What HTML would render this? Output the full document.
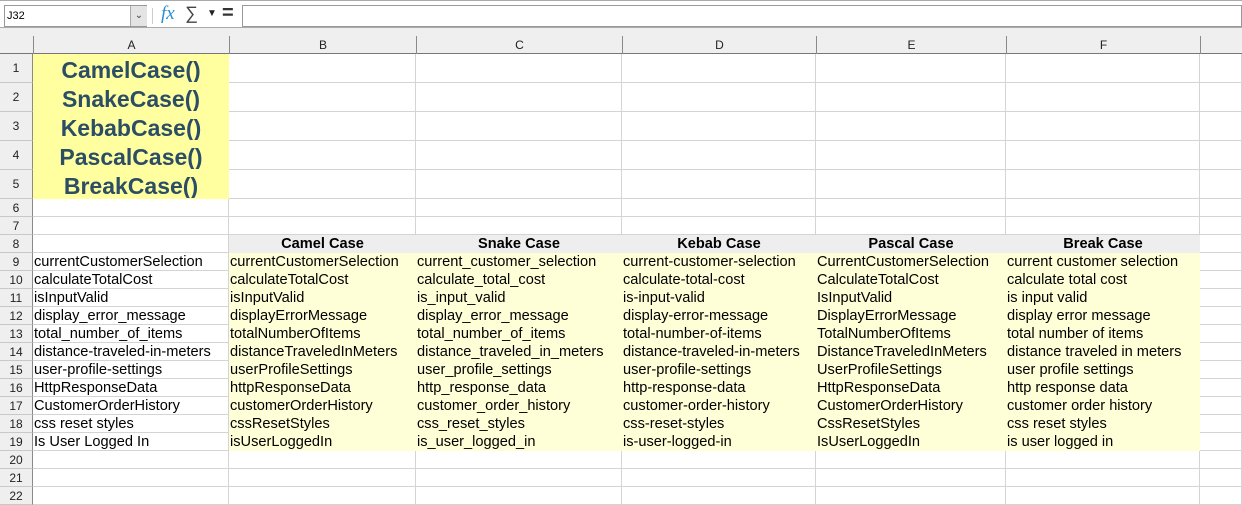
<!DOCTYPE html><html><head><style>
body{margin:0;width:1242px;height:500px;overflow:hidden;background:#fff;font-family:"Liberation Sans",Arial,sans-serif;position:relative}
.a{position:absolute;box-sizing:border-box}
.c{position:absolute;box-sizing:border-box;border-right:1px solid #d4d4d4;border-bottom:1px solid #d4d4d4;font-size:14.6px;line-height:19px;padding-left:1px;white-space:nowrap;overflow:hidden;color:#000}
.y{background:#ffffd7;border-color:#ffffd7}
.g{background:#eeeeee;border-color:#eeeeee;font-weight:bold;text-align:center}
.t{background:#ffff9f;border-color:#ffff9f;color:#2b4d65;font-weight:bold;font-size:23px;text-align:center;line-height:33px}
.rh{position:absolute;left:0;width:33px;box-sizing:border-box;background:#efefef;border-right:1px solid #8a8a8a;border-bottom:1px solid #c8c8c8;font-size:12px;text-align:center;color:#222}
.ch{position:absolute;top:36px;height:18px;box-sizing:border-box;border-left:1px solid #8a8a8a;font-size:12px;text-align:center;line-height:18px;color:#222}
</style></head><body>
<div class="a" style="left:0;top:0;width:1242px;height:28px;background:#fff;border-top:1px solid #aaa;border-bottom:1px solid #aaa"></div>
<div class="a" style="left:4px;top:5px;width:143px;height:22px;border:1px solid #999;background:#fff;font-size:11px;line-height:20px;padding-left:2px">J32</div>
<div class="a" style="left:130px;top:6px;width:17px;height:20px;background:#e4e4e4;border-left:1px solid #aaa;font-size:10px;text-align:center;line-height:20px;color:#444">&#8964;</div>
<div class="a" style="left:152px;top:8px;width:1px;height:16px;background:#ccc"></div>
<div class="a" style="left:161px;top:3px;font-family:'Liberation Serif',serif;font-style:italic;font-size:19px;color:#2a8fd0">fx</div>
<div class="a" style="left:185px;top:3px;font-size:18px;color:#444">&#8721;</div>
<div class="a" style="left:207px;top:8px;font-size:10px;color:#222">&#9660;</div>
<div class="a" style="left:222px;top:2px;font-size:20px;font-weight:bold;color:#333">=</div>
<div class="a" style="left:242px;top:5px;width:1000px;height:22px;border:1px solid #999;background:#fff"></div>
<div class="a" style="left:0;top:28px;width:1242px;height:26px;background:#efefef;border-bottom:1px solid #777"></div>
<div class="ch" style="left:33px;width:196px">A</div>
<div class="ch" style="left:229px;width:187px">B</div>
<div class="ch" style="left:416px;width:206px">C</div>
<div class="ch" style="left:622px;width:194px">D</div>
<div class="ch" style="left:816px;width:190px">E</div>
<div class="ch" style="left:1006px;width:194px">F</div>
<div class="ch" style="left:1200px;width:42px;border-right:none"></div>
<div id="g"></div>
<script>
(function(){
var cols=[33,229,416,622,816,1006,1200,1242];
var rows=[54];for(var i=0;i<5;i++)rows.push(rows[rows.length-1]+29);
for(var i=0;i<17;i++)rows.push(rows[rows.length-1]+18);
var titles=["CamelCase()","SnakeCase()","KebabCase()","PascalCase()","BreakCase()"];
var data=[
["currentCustomerSelection","currentCustomerSelection","current_customer_selection","current-customer-selection","CurrentCustomerSelection","current customer selection"],
["calculateTotalCost","calculateTotalCost","calculate_total_cost","calculate-total-cost","CalculateTotalCost","calculate total cost"],
["isInputValid","isInputValid","is_input_valid","is-input-valid","IsInputValid","is input valid"],
["display_error_message","displayErrorMessage","display_error_message","display-error-message","DisplayErrorMessage","display error message"],
["total_number_of_items","totalNumberOfItems","total_number_of_items","total-number-of-items","TotalNumberOfItems","total number of items"],
["distance-traveled-in-meters","distanceTraveledInMeters","distance_traveled_in_meters","distance-traveled-in-meters","DistanceTraveledInMeters","distance traveled in meters"],
["user-profile-settings","userProfileSettings","user_profile_settings","user-profile-settings","UserProfileSettings","user profile settings"],
["HttpResponseData","httpResponseData","http_response_data","http-response-data","HttpResponseData","http response data"],
["CustomerOrderHistory","customerOrderHistory","customer_order_history","customer-order-history","CustomerOrderHistory","customer order history"],
["css reset styles","cssResetStyles","css_reset_styles","css-reset-styles","CssResetStyles","css reset styles"],
["Is User Logged In","isUserLoggedIn","is_user_logged_in","is-user-logged-in","IsUserLoggedIn","is user logged in"]];
var hdr=["","Camel Case","Snake Case","Kebab Case","Pascal Case","Break Case"];
var h="";
for(var r=0;r<22;r++){
 var ty=rows[r],ht=rows[r+1]-rows[r];
 h+='<div class="rh" style="top:'+ty+'px;height:'+ht+'px;line-height:'+ht+'px">'+(r+1)+'</div>';
 for(var c=0;c<7;c++){
  var cls="c",txt="";
  if(c==0&&r<5){cls+=" t";txt=titles[r];}
  else if(r==7&&c>=1&&c<=5){cls+=" g";txt=hdr[c];}
  else if(r>=8&&r<=18&&c<=5){txt=data[r-8][c];if(c>=1)cls+=" y";}
  h+='<div class="'+cls+'" style="left:'+cols[c]+'px;top:'+ty+'px;width:'+(cols[c+1]-cols[c])+'px;height:'+ht+'px">'+txt+'</div>';
 }
}
document.getElementById("g").innerHTML=h;
})();
</script>
</body></html>
